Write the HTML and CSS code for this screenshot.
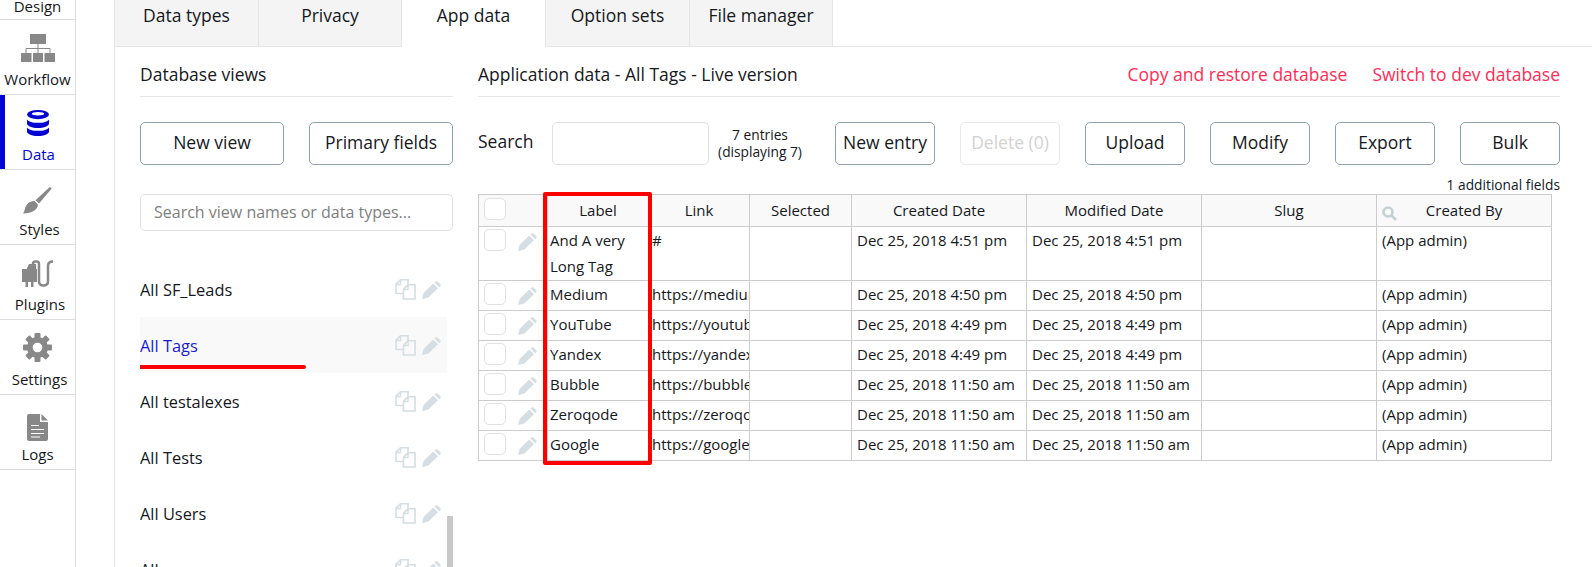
FILE: index.html
```html
<!DOCTYPE html>
<html lang="en">
<head>
<meta charset="utf-8">
<title>App data</title>
<link rel="stylesheet" href="styles.css">
</head>
<body>
<svg class="defs" width="0" height="0" aria-hidden="true">
  <symbol id="pencil" viewBox="0 0 19 18">
    <path d="M0 18 L1.6 12 L11.2 2.6 L16 7.2 L6.4 16.6 Z"/>
    <path d="M12.4 1.4 L13.4 .5 C14 0 14.8 0 15.4 .5 L18.3 3.3 C18.9 3.9 18.9 4.7 18.3 5.3 L17.2 6.2 Z"/>
  </symbol>
  <symbol id="copy" viewBox="0 0 21 21">
    <path class="line" d="M8 14.500 H1 V5 L5.500 .8 H13 V5.800 M5.500 1 V5.500 H1"/>
    <path class="line" d="M8.500 20 V10 L13 5.800 H20 V20 Z M13 6 V10.500 H8.500"/>
  </symbol>
</svg>
<div class="app">
  <nav class="sidebar">
    <div class="nav-item nav-clipped"><span class="nav-label">Design</span></div>
    <div class="nav-item">
      <svg class="ico ico-workflow" viewBox="0 0 34 28"><rect x="9" width="16" height="10"/><rect y="19" width="10.5" height="9"/><rect x="12" y="19" width="10" height="9"/><rect x="23.5" y="19" width="10.5" height="9"/><path class="wire" d="M17 10 V19 M5 19 V14.5 H29 V19"/></svg>
      <span class="nav-label">Workflow</span>
    </div>
    <div class="nav-item nav-active">
      <svg class="ico ico-data" viewBox="0 0 22 26"><ellipse cx="11" cy="4.6" rx="11" ry="4.6"/><ellipse class="hole" cx="11" cy="3.8" rx="6.2" ry="1.7"/><path d="M0 9.4 C1.5 11.6 5.8 12.8 11 12.8 S20.500 11.600 22 9.400 V13.400 C22 16 17 18 11 18 S0 16 0 13.400 Z"/><path d="M0 17.400 C1.500 19.600 5.800 20.800 11 20.800 S20.500 19.600 22 17.400 V21.400 C22 24 17 26 11 26 S0 24 0 21.400 Z"/></svg>
      <span class="nav-label nav-label-s">Data</span>
    </div>
    <div class="nav-item">
      <svg class="ico ico-styles" viewBox="0 0 29 27"><path d="M26.500 .3 C27.500 -.3 28.800 1 28.300 2 L16 16.500 L12.500 13.300 Z"/><path d="M11.500 14 L15 17.500 C14.500 23 9 26.500 0 26.500 C2 24 1.500 21 3.500 18 C5.500 15 8.500 14 11.500 14 Z"/></svg>
      <span class="nav-label nav-label-m">Styles</span>
    </div>
    <div class="nav-item">
      <svg class="ico ico-plugins" viewBox="0 0 31 27"><path d="M5 8 L7 4 H14 V9 H15 V22 H11.500 V27 H9 V22 H6 V27 H3.500 V22 H0 V9 H5 Z"/><path class="cord" d="M11 5 V4 Q11 1.500 13.500 1.500 H14.500 Q17 1.500 17 4 V21 Q17 25.500 21.500 25.500 Q26 25.500 26 21 V6 Q26 1.500 31 1.500"/></svg>
      <span class="nav-label nav-label-l">Plugins</span>
    </div>
    <div class="nav-item">
      <svg class="ico ico-settings" viewBox="-14.500 -14.500 29 29"><g><rect x="-3" y="-14.500" width="6" height="29" rx="1"/><rect x="-3" y="-14.500" width="6" height="29" rx="1" transform="rotate(45)"/><rect x="-3" y="-14.500" width="6" height="29" rx="1" transform="rotate(90)"/><rect x="-3" y="-14.500" width="6" height="29" rx="1" transform="rotate(135)"/></g><circle r="10.500"/><circle class="hole" r="4.800"/></svg>
      <span class="nav-label nav-label-m">Settings</span>
    </div>
    <div class="nav-item">
      <svg class="ico ico-logs" viewBox="0 0 21 27"><path d="M2 0 H13 V8 H21 V25 A2 2 0 0 1 19 27 H2 A2 2 0 0 1 0 25 V2 A2 2 0 0 1 2 0 Z"/><path d="M14.500 0 L21 6.500 H14.500 Z"/><path class="rule" d="M4 11.500 H12 M4 15.500 H17 M4 19.500 H17 M4 23 H13"/></svg>
      <span class="nav-label">Logs</span>
    </div>
  </nav>

  <main class="panel">
    <div class="tabs">
      <div class="tab">Data types</div>
      <div class="tab">Privacy</div>
      <div class="tab tab-active">App data</div>
      <div class="tab">Option sets</div>
      <div class="tab">File manager</div>
    </div>
    <div class="content">
      <section class="views">
        <div class="section-head">Database views</div>
        <div class="view-actions">
          <div class="btn btn-wide">New view</div>
          <div class="btn btn-wide">Primary fields</div>
        </div>
        <div class="view-search">Search view names or data types...</div>
        <ul class="view-list">
          <li class="view-row"><span class="view-name">All SF_Leads</span><svg class="row-copy"><use href="#copy"/></svg><svg class="row-pencil"><use href="#pencil"/></svg></li>
          <li class="view-row view-current"><span class="view-name">All Tags</span><svg class="row-copy"><use href="#copy"/></svg><svg class="row-pencil"><use href="#pencil"/></svg><div class="underline"></div></li>
          <li class="view-row"><span class="view-name">All testalexes</span><svg class="row-copy"><use href="#copy"/></svg><svg class="row-pencil"><use href="#pencil"/></svg></li>
          <li class="view-row"><span class="view-name">All Tests</span><svg class="row-copy"><use href="#copy"/></svg><svg class="row-pencil"><use href="#pencil"/></svg></li>
          <li class="view-row"><span class="view-name">All Users</span><svg class="row-copy"><use href="#copy"/></svg><svg class="row-pencil"><use href="#pencil"/></svg></li>
          <li class="view-row"><span class="view-name">All</span><svg class="row-copy"><use href="#copy"/></svg><svg class="row-pencil"><use href="#pencil"/></svg></li>
        </ul>
        <div class="scroll-thumb"></div>
      </section>

      <section class="records">
        <div class="section-head records-head">
          <span class="records-title">Application data - All Tags - Live version</span>
          <span class="head-link">Copy and restore database</span>
          <span class="head-link">Switch to dev database</span>
        </div>
        <div class="toolbar">
          <span class="search-label">Search</span>
          <div class="search-box"></div>
          <div class="entries">7 entries<br>(displaying 7)</div>
          <div class="btn">New entry</div>
          <div class="btn btn-disabled">Delete (0)</div>
          <div class="btn">Upload</div>
          <div class="btn">Modify</div>
          <div class="btn">Export</div>
          <div class="btn">Bulk</div>
        </div>
        <div class="extra-fields">1 additional fields</div>
        <div class="table-wrap">
          <table class="grid">
            <colgroup>
              <col class="c-check"><col class="c-label"><col class="c-link"><col class="c-sel"><col class="c-date"><col class="c-date"><col class="c-slug"><col class="c-by">
            </colgroup>
            <thead>
              <tr>
                <th><span class="check check-head"></span></th>
                <th>Label</th><th>Link</th><th>Selected</th><th>Created Date</th><th>Modified Date</th><th>Slug</th>
                <th class="th-by"><svg class="th-search" viewBox="0 0 15 15"><circle cx="6" cy="6" r="4.500"/><path d="M9.500 9.500 L14 14"/></svg>Created By</th>
              </tr>
            </thead>
            <tbody>
              <tr class="row-tall"><td><div class="row-tools"><span class="check"></span><svg class="cell-pencil"><use href="#pencil"/></svg></div></td><td>And A very Long Tag</td><td class="link"><div class="clip">#</div></td><td></td><td>Dec 25, 2018 4:51 pm</td><td>Dec 25, 2018 4:51 pm</td><td></td><td>(App admin)</td></tr>
              <tr><td><div class="row-tools"><span class="check"></span><svg class="cell-pencil"><use href="#pencil"/></svg></div></td><td>Medium</td><td class="link"><div class="clip">https://medium.com</div></td><td></td><td>Dec 25, 2018 4:50 pm</td><td>Dec 25, 2018 4:50 pm</td><td></td><td>(App admin)</td></tr>
              <tr><td><div class="row-tools"><span class="check"></span><svg class="cell-pencil"><use href="#pencil"/></svg></div></td><td>YouTube</td><td class="link"><div class="clip">https://youtube.com</div></td><td></td><td>Dec 25, 2018 4:49 pm</td><td>Dec 25, 2018 4:49 pm</td><td></td><td>(App admin)</td></tr>
              <tr><td><div class="row-tools"><span class="check"></span><svg class="cell-pencil"><use href="#pencil"/></svg></div></td><td>Yandex</td><td class="link"><div class="clip">https://yandex.com</div></td><td></td><td>Dec 25, 2018 4:49 pm</td><td>Dec 25, 2018 4:49 pm</td><td></td><td>(App admin)</td></tr>
              <tr><td><div class="row-tools"><span class="check"></span><svg class="cell-pencil"><use href="#pencil"/></svg></div></td><td>Bubble</td><td class="link"><div class="clip">https://bubble.io</div></td><td></td><td>Dec 25, 2018 11:50 am</td><td>Dec 25, 2018 11:50 am</td><td></td><td>(App admin)</td></tr>
              <tr><td><div class="row-tools"><span class="check"></span><svg class="cell-pencil"><use href="#pencil"/></svg></div></td><td>Zeroqode</td><td class="link"><div class="clip">https://zeroqode.com</div></td><td></td><td>Dec 25, 2018 11:50 am</td><td>Dec 25, 2018 11:50 am</td><td></td><td>(App admin)</td></tr>
              <tr><td><div class="row-tools"><span class="check"></span><svg class="cell-pencil"><use href="#pencil"/></svg></div></td><td>Google</td><td class="link"><div class="clip">https://google.com</div></td><td></td><td>Dec 25, 2018 11:50 am</td><td>Dec 25, 2018 11:50 am</td><td></td><td>(App admin)</td></tr>
            </tbody>
          </table>
          <div class="red-box"></div>
        </div>
      </section>
    </div>
  </main>
</div>
</body>
</html>
```
FILE: styles.css
```css
* { box-sizing: border-box; }
html, body { margin: 0; height: 567px; overflow: hidden; background: #fff; }
body { font-family: "Open Sans", sans-serif; color: #15181c; font-size: 14px; }
.defs { position: absolute; }

.app { display: flex; height: 567px; }

/* sidebar */
.sidebar { width: 76px; flex: none; border-right: 1px solid #dcdcdc; height: 567px; }
.nav-item {
  height: 75px; border-bottom: 1px solid #dcdcdc; position: relative;
  display: flex; flex-direction: column; align-items: center;
}
.nav-clipped { height: 20px; justify-content: flex-end; overflow: hidden; padding-bottom: 3px; }
.nav-active { color: #0205d3; }
.nav-active::before { content: ""; position: absolute; left: 0; top: 0; bottom: 0; width: 5px; background: #0205d3; }
.nav-label { font-size: 15px; line-height: 20px; white-space: nowrap; }
.nav-label-s { margin-left: 2px; }
.nav-label-m { margin-left: 4px; }
.nav-label-l { margin-left: 5px; }
.ico { display: block; fill: #888; flex: none; }
.ico .wire { fill: none; stroke: #888; stroke-width: 1; }
.ico .hole { fill: #fff; }
.ico .cord { fill: none; stroke: #888; stroke-width: 2.5; }
.ico .rule { fill: none; stroke: #fff; stroke-width: 1.2; }
.ico-workflow { width: 34px; height: 28px; margin: 14px 0 7px; }
.ico-data { width: 22px; height: 26px; margin: 15px 0 8px; fill: #0205d3; }
.ico-styles { width: 29px; height: 27px; margin: 17px 0 5px; }
.ico-plugins { width: 31px; height: 27px; margin: 15px 0 7px; }
.ico-settings { width: 29px; height: 29px; margin: 13px 0 7px; }
.ico-logs { width: 21px; height: 27px; margin: 19px 0 3px; }

/* main panel */
.panel { flex: none; width: 1478px; margin-left: 38px; border-left: 1px solid #e6e6e6; height: 567px; }
.tabs { display: grid; grid-template-columns: 144px 143px 144px 144px 143px; height: 47px; border-bottom: 1px solid #e6e6e6; }
.tab {
  background: #f4f4f4; border-right: 1px solid #e6e6e6; margin-bottom: -1px; border-bottom: 1px solid #e6e6e6;
  text-align: center; font-size: 17.5px; line-height: 30px;
}
.tab-active { background: #fff; border-bottom-color: #fff; border-left: 0; }

.content { display: flex; padding-left: 25px; }
.views { width: 313px; flex: none; position: relative; height: 520px; }
.records { width: 1082px; margin-left: 25px; flex: none; }

.section-head { height: 50px; padding-top: 15px; line-height: 24px; font-size: 17.5px; border-bottom: 1px solid #e6e6e6; }
.records-head { display: flex; gap: 25px; }
.records-title { margin-right: auto; }
.head-link { color: #ff2d55; }

.btn {
  width: 100px; height: 43px; flex: none; border: 1px solid #8fa3ad; border-radius: 5px;
  display: flex; align-items: center; justify-content: center; padding-bottom: 4px;
  font-size: 17.5px; white-space: nowrap;
}
.btn-wide { width: 144px; }
.btn-disabled { border-color: #e9e9e9; color: #d2d2d2; }

.view-actions { display: flex; justify-content: space-between; margin-top: 25px; }
.view-search {
  height: 37px; margin-top: 29px; border: 1px solid #e2e2e2; border-radius: 5px;
  padding-left: 13px; line-height: 34px; font-size: 16px; color: #808080; white-space: nowrap;
}
.view-list { list-style: none; margin: 30px 0 0; padding: 0; height: 306px; overflow: hidden; width: 307px; }
.view-row { height: 56px; display: flex; align-items: center; position: relative; font-size: 16.4px; padding: 1px 6px 0 0; }
.view-name { flex: 1; }
.view-current { background: #f9f9f9; color: #1a1ad6; }
.row-copy { width: 21px; height: 21px; margin-right: 6px; }
.row-pencil { width: 19px; height: 18px; fill: #d5dee2; }
.line { fill: none; stroke: #d5dee2; stroke-width: 1.6; }
.underline { position: absolute; left: -18px; top: 48px; width: 184px; height: 4px; border-radius: 2px; background: #f00; }
.scroll-thumb { position: absolute; right: 0; top: 469px; width: 6px; height: 60px; background: #c8c8c8; }

.toolbar { display: flex; align-items: center; margin-top: 25px; gap: 25px; }
.search-label { width: 74px; margin-right: -25px; font-size: 17.5px; flex: none; margin-top: -5px; }
.search-box { width: 157px; height: 43px; flex: none; border: 1px solid #e2e2e2; border-radius: 5px; margin-right: -25px; }
.entries { width: 102px; flex: none; text-align: center; font-size: 13.75px; line-height: 17px; margin-top: -1px; margin-right: -1px; white-space: nowrap; }
.extra-fields { text-align: right; font-size: 13.75px; line-height: 18px; margin-top: 11px; }

/* table */
.table-wrap { position: relative; width: 1073px; }
.grid { border-collapse: collapse; table-layout: fixed; width: 1073px; }
.c-check { width: 69px; } .c-label { width: 101px; } .c-link { width: 101px; } .c-sel { width: 102px; }
.c-date { width: 175px; } .c-slug { width: 175px; } .c-by { width: 175px; }
.grid th, .grid td { border: 1px solid #ccc; padding: 0 5px; vertical-align: top; font-size: 15px; line-height: 26px; }
.grid th { background: #f9f9f9; font-weight: 400; height: 32px; padding-top: 2px; line-height: 26px; text-align: center; position: relative; }
.grid td { height: 30px; }
.grid .row-tall td { height: 54px; }
.grid td:first-child, .grid th:first-child { padding: 0; text-align: left; }
.grid td.link { padding: 0 0 0 3px; }
.clip { overflow: hidden; white-space: nowrap; }
.grid td:nth-child(2) { padding-left: 2px; padding-right: 2px; }

.row-tools { display: flex; align-items: flex-start; gap: 12px; padding: 2px 0 0 5px; }
.check { display: block; width: 22px; height: 22px; border: 1px solid #e2e2e2; border-radius: 5px; background: #fff; flex: none; }
.check-head { margin: 3px 0 0 5px; }
.cell-pencil { width: 19px; height: 18px; fill: #d5dee2; margin-top: 4px; }
.th-search { position: absolute; left: 5px; top: 11px; width: 15px; height: 15px; fill: none; stroke: #c5d0d5; stroke-width: 2.6; }
.red-box { position: absolute; left: 65px; top: -2px; width: 109px; height: 273px; border: 4px solid #f00; border-radius: 2px; }
```
